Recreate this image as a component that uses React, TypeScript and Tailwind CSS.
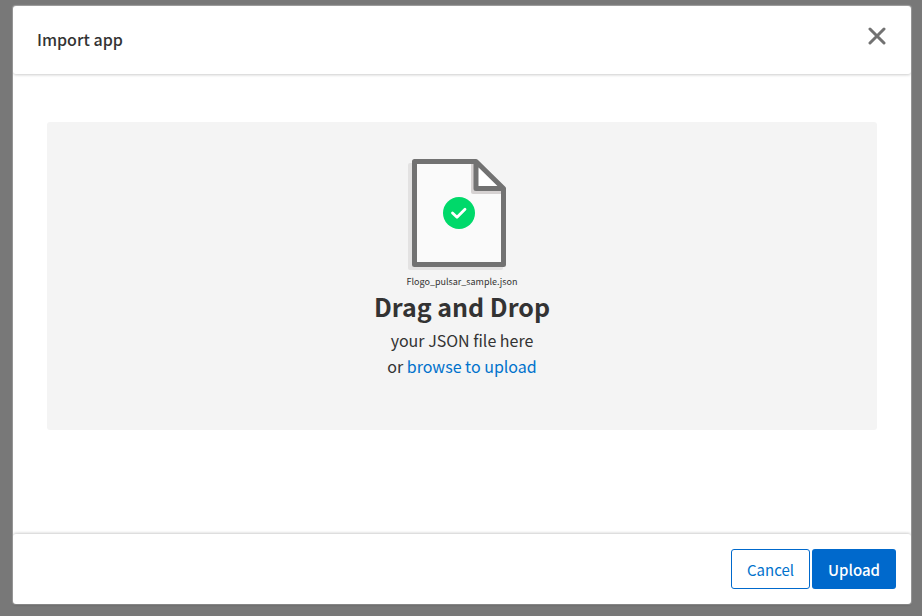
import React from "react";

function FileIcon() {
  return (
    <svg width="100" height="114" viewBox="0 0 100 114" aria-hidden="true">
      <path d="M2 5h60v30h33v75a2 2 0 0 1-2 2H2a2 2 0 0 1-2-2V7a2 2 0 0 1 2-2Z" fill="#e3e2e2" />
      <path d="M6.500 3.500H68L95.500 30.500V106.500H6.500Z" fill="#fafafa" />
      <path d="M63 5H70V30H94V36H65a2 2 0 0 1-2-2Z" fill="#d6d2d2" />
      <path d="M68 3.500V30.500H95.500Z" fill="#ffffff" />
      <path
        d="M6.500 3.500H68L95.500 30.500V106.500H6.500ZM68 3.500V30.500H95.500"
        fill="none"
        stroke="#727272"
        strokeWidth="5"
        strokeLinejoin="round"
      />
      <circle cx="51" cy="55" r="16" fill="#00d96a" />
      <path
        d="M44.500 55l4.500 4.200 8-8"
        fill="none"
        stroke="#ffffff"
        strokeWidth="2.800"
        strokeLinecap="round"
        strokeLinejoin="round"
      />
    </svg>
  );
}

function CloseIcon() {
  return (
    <svg width="18" height="18" viewBox="0 0 18 18" aria-hidden="true">
      <path d="M2 2L16 16M16 2L2 16" stroke="#727272" strokeWidth="3" strokeLinecap="round" />
    </svg>
  );
}

export default function App() {
  return (
    <div className="flex min-h-screen flex-col bg-[#787878] pt-[6px] pr-[11px] pb-3 pl-[13px] font-['Noto_Sans_CJK_SC',sans-serif] text-[#333333]">
      <div
        role="dialog"
        aria-labelledby="dialog-title"
        className="flex flex-1 flex-col overflow-hidden rounded-[3px] bg-white shadow-[0_0_1px_1px_#ffffff50,0_1px_2px_#00000060]"
      >
        <header className="flex h-[68px] items-center justify-between rounded-b-[3px] pr-[25px] pl-6 shadow-[0_1px_3px_#00000033]">
          <h1 id="dialog-title" className="pb-[2px] text-base font-medium">
            Import app
          </h1>
          <button type="button" aria-label="Close" className="mb-2">
            <CloseIcon />
          </button>
        </header>
        <main className="flex-1 px-[34px] pt-12 pb-[103px]">
          <section className="flex h-[308px] flex-col items-center rounded-[3px] bg-[#f4f4f4] pt-9 text-center">
            <div className="pr-2">
              <FileIcon />
            </div>
            <p className="mt-1 text-[9px] leading-3">Flogo_pulsar_sample.json</p>
            <h2 className="mb-[3px] text-[25px] leading-9 font-bold">Drag and Drop</h2>
            <p className="text-base leading-[26px]">
              your JSON file here
              <br />
              or{" "}
              <a href="#browse" className="text-[#0072cc]">
                browse to upload
              </a>
            </p>
          </section>
        </main>
        <footer className="flex h-[70px] items-center justify-end gap-[2px] rounded-t-[3px] pr-[15px] shadow-[0_-1px_3px_#00000033]">
          <button type="button" className="h-10 rounded-[3px] border border-[#0069cc] px-[15px] pt-[2px] text-[15px] text-[#0072cc]">
            Cancel
          </button>
          <button type="button" className="h-10 rounded-[3px] bg-[#0069cc] px-4 pt-[2px] text-[15px] font-medium text-white">
            Upload
          </button>
        </footer>
      </div>
    </div>
  );
}
